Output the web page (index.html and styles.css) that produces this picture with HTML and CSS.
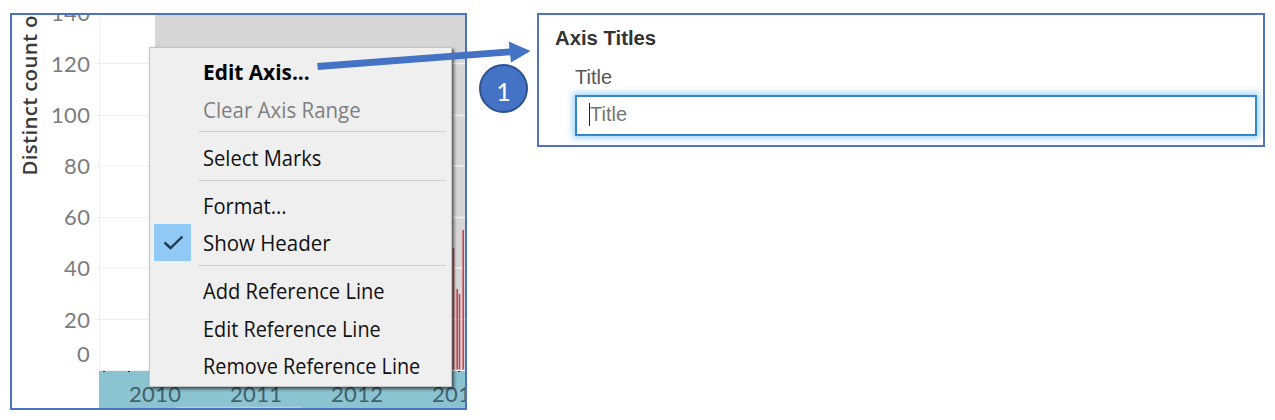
FILE: index.html
```
<!DOCTYPE html>
<html lang="en">
<head>
<meta charset="utf-8">
<title>Edit Axis</title>
<link rel="stylesheet" href="styles.css">
</head>
<body>
<main class="stage">
  <section class="chart-panel">
    <svg class="chart" viewBox="12 15 453 393" width="453" height="393">
      <rect class="band" x="155" y="15" width="310" height="355"/>
      <path class="grid" d="M95 63.5H155M95 115.5H155M95 166H155M95 217.5H155M95 268H155M95 319.5H155M95 370.5H155M99.5 15V371"/>
      <path class="grid-light" d="M155 63.5H465M155 115.5H465M155 166H465M155 217.5H465M155 268H465M155 319.5H465"/>
      <path class="bar" d="M453.5 248V369.500M457.200 289V369.500M459.500 294V369.500M463.200 230V369.500"/>
      <rect class="time-axis" x="99" y="371" width="366" height="37"/>
      <path class="tick" d="M103 371.500h2M128 371.500h2M458 371.500h2"/>
      <g class="y-labels">
        <text x="51" y="21" textLength="39">140</text>
        <text x="51" y="71.500" textLength="39">120</text>
        <text x="51" y="123" textLength="39">100</text>
        <text x="64" y="173.500" textLength="26">80</text>
        <text x="64" y="225" textLength="26">60</text>
        <text x="64" y="275.500" textLength="26">40</text>
        <text x="64" y="327.500" textLength="26">20</text>
        <text x="77" y="362">0</text>
      </g>
      <g class="x-labels">
        <text x="129" y="402" textLength="52">2010</text>
        <text x="230" y="402" textLength="52">2011</text>
        <text x="331" y="402" textLength="52">2012</text>
        <text x="432" y="402" textLength="39">201</text>
      </g>
      <path class="scroll" d="M176 407.500H302"/>
      <text class="axis-title" transform="translate(37 175.500) rotate(-90)" textLength="160">Distinct count o</text>
    </svg>
    <ul class="menu">
      <li class="item default"><span class="text edit">Edit Axis...</span></li>
      <li class="item disabled"><span class="text clear">Clear Axis Range</span></li>
      <li class="sep"></li>
      <li class="item"><span class="text">Select Marks</span></li>
      <li class="sep"></li>
      <li class="item"><span class="text">Format...</span></li>
      <li class="item checked">
        <svg class="check" width="37" height="37" viewBox="0 0 37 37"><path d="M10.500 18.500L16.500 24L28.500 12.500"/></svg>
        <span class="text clear">Show Header</span>
      </li>
      <li class="sep"></li>
      <li class="item"><span class="text">Add Reference Line</span></li>
      <li class="item"><span class="text tight">Edit Reference Line</span></li>
      <li class="item"><span class="text tight">Remove Reference Line</span></li>
    </ul>
  </section>
  <section class="form-panel">
    <h2 class="heading">Axis Titles</h2>
    <label class="label" for="title">Title</label>
    <div class="field" id="title"><span class="caret"></span><span class="placeholder">Title</span></div>
  </section>
  <svg class="arrow" width="1275" height="420" viewBox="0 0 1275 420">
    <path d="M317.200 63L509.300 48.500L508.900 41.500L530.500 51L511 62.500L510.200 55.300L317.800 70Z"/>
  </svg>
  <div class="badge">1</div>
</main>
</body>
</html>
```
FILE: styles.css
```
body { margin: 0; background: #fff; }
.stage {
  position: relative;
  box-sizing: border-box;
  width: 1275px;
  height: 420px;
  padding: 13px 10px;
  display: flex;
  align-items: flex-start;
  justify-content: space-between;
  overflow: hidden;
}
.chart-panel { position: relative; border: 2px solid #4a72c4; width: 453px; height: 393px; }
.chart { display: block; }
.band { fill: #d6d6d6; }
.grid { stroke: #f0f0f0; fill: none; }
.grid-light { stroke: #f2f2f2; stroke-width: 1.3; fill: none; }
.bar { stroke: #c9434f; stroke-width: 1.6; fill: none; }
.time-axis { fill: #8bc3d1; }
.tick { stroke: #333; }
.scroll { stroke: #c3ccd8; stroke-width: 1.5; }
.y-labels { font: 22px Lato, sans-serif; fill: #7c7c7c; }
.x-labels { font: 22px Lato, sans-serif; fill: #42606a; }
.axis-title { font: 600 20.5px "Open Sans", sans-serif; fill: #3a3a3a; }

.menu {
  position: absolute;
  left: 137px;
  top: 32px;
  box-sizing: border-box;
  width: 303px;
  height: 340px;
  margin: 0;
  padding: 5px 5px 0 4px;
  list-style: none;
  background: #efefef;
  border: 1px solid #c4c4c4;
  box-shadow: 2px 2px 3px rgba(0, 0, 0, 0.6);
  font: 21.500px "Open Sans", sans-serif;
  color: #111;
}
.item { display: flex; align-items: center; height: 37.400px; padding-left: 49px; white-space: nowrap; }
.text { transform: scaleX(0.936); transform-origin: left center; }
.clear { transform: scaleX(0.952); }
.tight { transform: scaleX(0.924); }
.edit { transform: scaleX(0.97); }
.default { font-weight: 700; color: #000; }
.disabled { color: #7f7f7f; }
.checked { padding-left: 0; gap: 12px; }
.check { background: #90c8f6; fill: none; stroke: #233a4c; stroke-width: 2.4; }
.sep { height: 7px; margin: 3.700px 0 0 44px; border-top: 1px solid #d0d0d0; box-sizing: border-box; }

.form-panel {
  box-sizing: border-box;
  width: 728px;
  height: 134px;
  padding: 10px 6px 0 16px;
  border: 2px solid #5272b8;
  font-family: "Liberation Sans", Arial, sans-serif;
}
.heading { margin: 0; font-size: 20.300px; line-height: 26px; color: #333; }
.label { display: block; margin: 14px 0 0 20px; font-size: 20px; line-height: 24px; color: #555; }
.field {
  display: flex;
  align-items: center;
  box-sizing: border-box;
  height: 41px;
  margin: 6px 0 0 20px;
  padding: 0 0 3px 12px;
  border: 2px solid #3288ca;
  box-shadow: 0 0 7px 2px rgba(82, 176, 240, 0.6);
  font-size: 20px;
}
.caret { width: 1px; height: 23px; background: #222; }
.placeholder { color: #757575; }

.arrow { position: absolute; left: 0; top: 0; fill: #4472c4; }
.badge {
  position: absolute;
  left: 479px;
  top: 64px;
  box-sizing: border-box;
  width: 49px;
  height: 49px;
  padding-top: 4px;
  border: 2.500px solid #2f528f;
  border-radius: 50%;
  background: #4472c4;
  color: #fff;
  font: 25px/42px Lato, sans-serif;
  text-align: center;
}
```
